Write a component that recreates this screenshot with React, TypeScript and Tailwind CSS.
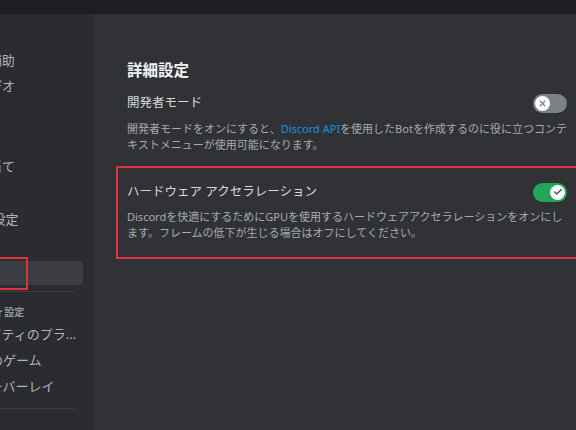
import { Check, X } from 'lucide-react';

const font = "font-['Noto_Sans','Noto_Sans_CJK_JP',sans-serif]";

const appItems = [
  'ユーザー補助',
  '音声・ビデオ',
  'チャット',
  '通知',
  'キー割り当て',
  '言語',
  'Windows設定',
  '配信モード',
];

const activityItems = ['アクティビティのプライバシー', '登録済みのゲーム', 'ゲームオーバーレイ'];

function Toggle({ on }: { on: boolean }) {
  return (
    <div
      className={`relative w-[34px] h-[19px] rounded-full shrink-0 ${on ? 'bg-[#23a55a]' : 'bg-[#7c8089]'}`}
    >
      <div
        className={`absolute top-[2px] w-[15px] h-[15px] rounded-full bg-white flex items-center justify-center ${
          on ? 'right-[2px]' : 'left-[2px]'
        }`}
      >
        {on ? (
          <Check size={10} strokeWidth={3.5} className="text-[#4a5a50]" />
        ) : (
          <X size={9} strokeWidth={3.5} className="text-[#7c8089]" />
        )}
      </div>
    </div>
  );
}

export default function App() {
  return (
    <div className={`w-[576px] h-[430px] flex flex-col overflow-hidden bg-[#1d1e21] ${font}`}>
      {/* top bar */}
      <div className="h-[14px] shrink-0 bg-[#1d1e21]" />

      <div className="flex flex-1 min-h-0">
        {/* sidebar */}
        <div className="relative w-[94px] shrink-0 bg-[#2a2c30] overflow-hidden">
          <div className="ml-[-72px] w-[155px] pt-[34px]">
            {appItems.map(label => (
              <div
                key={label}
                className="h-[24px] mb-[2.6px] pl-[9px] pr-2 flex items-center text-[13px] leading-none text-[#b1b4ba] whitespace-nowrap"
              >
                {label}
              </div>
            ))}
            <div className="h-[24px] px-2 rounded bg-[#3b3d42] flex items-center text-[13px] leading-none text-white whitespace-nowrap">
              詳細設定
            </div>

            <div className="mx-2 mt-[6px] h-px bg-[#3a3c41]" />

            <div className="mt-[13px] h-[14px] px-2 flex items-center text-[10px] font-bold leading-none text-[#959aa2] whitespace-nowrap">
              アクティビティ設定
            </div>
            <div className="mt-[4px]">
              {activityItems.map(label => (
                <div
                  key={label}
                  className="h-[24px] mb-[2px] pl-[10px] pr-px flex items-center text-[13px] leading-none text-[#b1b4ba] whitespace-nowrap"
                >
                  <span className="truncate">{label}</span>
                </div>
              ))}
            </div>

            <div className="mx-2 mt-[9px] h-px bg-[#3a3c41]" />
          </div>

          {/* annotation box */}
          <div className="absolute left-[-4px] top-[243px] w-[32px] h-[33px] border-2 border-[#d8383d]" />
        </div>

        {/* main */}
        <div className="flex-1 bg-[#303236] overflow-hidden pl-[33px] pr-[9px] pt-[46px]">
          <h2 className="text-[15.5px] leading-[20px] font-bold text-[#f2f3f5]">詳細設定</h2>

          <div className="mt-[13px] flex items-center justify-between h-[20px]">
            <span className="text-[12.5px] leading-[20px] text-[#d7d9dc]">開発者モード</span>
            <Toggle on={false} />
          </div>
          <p className="mt-[8px] text-[11px] leading-[16px] text-[#a7aab0] whitespace-nowrap">
            開発者モードをオンにすると、<span className="text-[#1f8fe0]">Discord API</span>
            を使用したBotを作成するのに役に立つコンテ
            <br />
            キストメニューが使用可能になります。
          </p>

          <div className="relative mt-[29px]">
            <div className="absolute left-[-11px] top-[-16px] bottom-[-18px] right-[-30px] border-2 border-[#d8383d]" />
            <div className="flex items-center justify-between h-[20px]">
              <span className="text-[12.5px] leading-[20px] text-[#d7d9dc]">
                ハードウェア アクセラレーション
              </span>
              <Toggle on />
            </div>
            <p className="mt-[7px] text-[11px] leading-[16px] text-[#a7aab0] whitespace-nowrap">
              Discordを快適にするためにGPUを使用するハードウェアアクセラレーションをオンにし
              <br />
              ます。フレームの低下が生じる場合はオフにしてください。
            </p>
          </div>
        </div>
      </div>
    </div>
  );
}
